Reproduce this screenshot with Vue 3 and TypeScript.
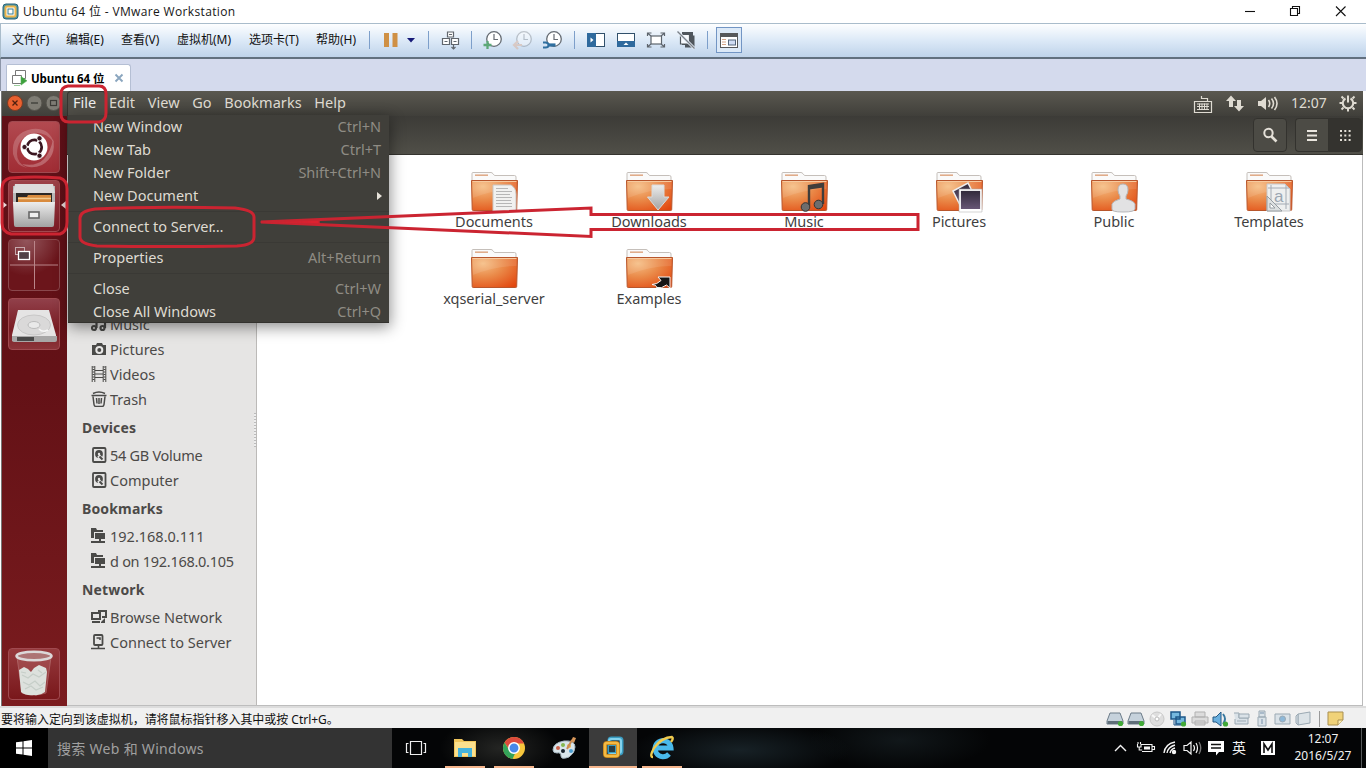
<script setup lang="ts">
interface MenuRow { label: string; keys?: string; sub?: boolean; sep?: boolean }
interface Place { label: string; icon?: string; heading?: boolean; tight?: boolean }
interface Folder { label: string; emblem: string }

const hostMenus: string[] = ['文件(F)', '编辑(E)', '查看(V)', '虚拟机(M)', '选项卡(T)', '帮助(H)']
const guestMenus: string[] = ['Edit', 'View', 'Go', 'Bookmarks', 'Help']

const fileMenu: MenuRow[] = [
  { label: 'New Window', keys: 'Ctrl+N' },
  { label: 'New Tab', keys: 'Ctrl+T' },
  { label: 'New Folder', keys: 'Shift+Ctrl+N' },
  { label: 'New Document', sub: true },
  { label: 'Connect to Server…', sep: true },
  { label: 'Properties', keys: 'Alt+Return', sep: true },
  { label: 'Close', keys: 'Ctrl+W', sep: true },
  { label: 'Close All Windows', keys: 'Ctrl+Q' },
]

const places: Place[] = [
  { label: 'Music', icon: 'music' },
  { label: 'Pictures', icon: 'camera' },
  { label: 'Videos', icon: 'film' },
  { label: 'Trash', icon: 'trash' },
  { label: 'Devices', heading: true },
  { label: '54 GB Volume', icon: 'disk', tight: true },
  { label: 'Computer', icon: 'disk' },
  { label: 'Bookmarks', heading: true },
  { label: '192.168.0.111', icon: 'share' },
  { label: 'd on 192.168.0.105', icon: 'share', tight: true },
  { label: 'Network', heading: true },
  { label: 'Browse Network', icon: 'network' },
  { label: 'Connect to Server', icon: 'server' },
]

const folders: Folder[] = [
  { label: 'Documents', emblem: 'doc' },
  { label: 'Downloads', emblem: 'down' },
  { label: 'Music', emblem: 'music' },
  { label: 'Pictures', emblem: 'pics' },
  { label: 'Public', emblem: 'person' },
  { label: 'Templates', emblem: 'template' },
  { label: 'xqserial_server', emblem: 'none' },
  { label: 'Examples', emblem: 'link' },
]
</script>

<template>
  <div class="screen">
    <svg class="defs" width="0" height="0">
      <defs>
        <radialGradient id="gFolder" cx="0.25" cy="0.2" r="1">
          <stop offset="0" stop-color="#f5bd83" /><stop offset="0.45" stop-color="#ea8a49" /><stop offset="1" stop-color="#e2470f" />
        </radialGradient>
        <linearGradient id="gSteel" x1="0" y1="0" x2="0" y2="1">
          <stop offset="0" stop-color="#ededed" /><stop offset="1" stop-color="#a2a2a2" />
        </linearGradient>
        <linearGradient id="gNight" x1="0" y1="0" x2="0" y2="1">
          <stop offset="0" stop-color="#2f2838" /><stop offset="1" stop-color="#6d5c7c" />
        </linearGradient>
      </defs>
    </svg>

    <header class="titlebar">
      <svg class="applogo" width="17" height="17" viewBox="0 0 17 17">
        <rect x="1" y="1" width="15" height="15" rx="3" fill="#4f93a0" stroke="#28657a" />
        <rect x="3.5" y="3.5" width="10" height="10" rx="1.5" fill="#fff" stroke="#e9b44b" stroke-width="2" />
        <rect x="6" y="6" width="5" height="5" fill="#fff" stroke="#337d92" />
      </svg>
      <span class="apptitle">Ubuntu 64 位 - VMware Workstation</span>
      <svg class="winbtns" width="110" height="20" viewBox="0 0 110 20" fill="none" stroke="#111" stroke-width="1.1">
        <path d="M1 9.500h10" />
        <path d="M46.500 6.500h7v7h-7zM48.500 6.500v-2h7v7h-2" />
        <path d="M92 4.500l9.500 9.500M101.500 4.500l-9.500 9.500" />
      </svg>
    </header>

    <div class="hostbar">
      <nav class="hostmenu"><span v-for="m in hostMenus" :key="m">{{ m }}</span></nav>
      <i class="sep first"></i>
      <svg class="tool" viewBox="0 0 30 26"><path d="M9 6h5v14H9zM17.500 6h5v14h-5z" fill="#cf9045" /></svg>
      <svg class="caret" viewBox="0 0 12 26"><path d="M2 11h8l-4 4.500z" fill="#161a78" /></svg>
      <i class="sep"></i>
      <svg class="tool" viewBox="0 0 30 26" fill="#fff" stroke="#60666d" stroke-width="1.200">
        <path d="M12.500 5h6v5h-6zM7.500 11.500h7v6h-7zM16.500 11.500h7v6h-7z" />
        <path d="M14 7.500h3M9.500 14.500h3M18.500 14.500h3M18.500 17.500v4M16.500 20l2 2 2-2" fill="none" />
      </svg>
      <i class="sep"></i>
      <svg v-for="n in 3" :key="n" class="tool" :class="{ faded: n === 2 }" viewBox="0 0 30 26">
        <circle cx="16" cy="12" r="7.300" fill="#fff" stroke="#666c73" stroke-width="1.300" />
        <path d="M16 7v5.500h4" fill="none" stroke="#666c73" stroke-width="1.200" />
        <path v-if="n === 1" d="M9.500 14v8M5.500 18h8" stroke="#5da878" stroke-width="2.300" />
        <path v-if="n === 2" d="M14 18H6M10 14l-4 4 4 4" fill="none" stroke="#df9b72" stroke-width="2.200" />
        <g v-if="n === 3" fill="none" stroke="#2f6f9f"><path d="M17.500 18H10" stroke-width="3.200" /><path d="M5 15.500h2.500q3 0 3 2.500t-3 2.500H5" stroke-width="2" /></g>
      </svg>
      <i class="sep"></i>
      <svg class="tool" viewBox="0 0 30 26"><rect x="6.500" y="6.500" width="17" height="13" fill="#fff" stroke="#31506b" /><path d="M6 6h9v14H6z" fill="#2f6a9d" /><path d="M9.500 10.500v5l3-2.500z" fill="#fff" /></svg>
      <svg class="tool" viewBox="0 0 30 26"><rect x="6.500" y="6.500" width="17" height="13" fill="#fff" stroke="#31506b" /><path d="M6 14h18v6H6z" fill="#2f6a9d" /><path d="M12.500 18h5L15 15.500z" fill="#fff" /></svg>
      <svg class="tool" viewBox="0 0 30 26" fill="none" stroke="#5d646c" stroke-width="1.200"><rect x="10" y="9" width="10.500" height="8" fill="#fff" /><path d="M6.500 9V6h4M23.500 9V6h-4M6.500 17v3h4M23.500 17v3h-4M7 6.500l3 2.500M23 6.500L20 9M7 19.500l3-2.500M23 19.500L20 17" /></svg>
      <svg class="tool" viewBox="0 0 30 26"><path d="M11 5h11v3.500h1.500v12H14V18H11z" fill="#4f565d" /><path d="M9.500 7.500h9v9.500h-9z" fill="#f7fafe" stroke="#4f565d" stroke-width="1.200" /><path d="M6.500 4.500l17 17" stroke="#e7effa" stroke-width="3" /><path d="M6.500 4.500l17 17" stroke="#7b8187" stroke-width="1.300" /></svg>
      <i class="sep"></i>
      <svg class="tool" viewBox="0 0 30 26"><rect x="2.500" y=".5" width="25" height="25" fill="#dce9f7" stroke="#7295c4" /><rect x="6.500" y="6.500" width="17" height="14" fill="#fff" stroke="#56585a" /><path d="M6 6h18v4H6z" fill="#56585a" /><path d="M8 12.500h4M8 15h4M8 17.500h4" stroke="#d4a68a" /><rect x="14.500" y="13" width="7" height="5" fill="#cfdcf3" stroke="#53657b" /></svg>
    </div>

    <div class="tabstrip">
      <div class="tab">
        <svg width="17" height="17" viewBox="0 0 17 17" fill="#fff" stroke="#777"><path d="M4.500 1.500h10v8h-10z" /><path d="M1.500 6.500h9v8h-9z" /><path d="M3 16.500h6M10 7.500l6 4.300-6 4.300z" fill="#3da13d" stroke="#5caf5c" stroke-width=".6" /></svg>
        <b>Ubuntu 64 位</b>
        <svg class="tabx" width="10" height="10" viewBox="0 0 10 10"><path d="M1.500 1.500l7 7M8.500 1.500l-7 7" stroke="#8ba6bf" stroke-width="1.900" /></svg>
      </div>
    </div>

    <section class="guest">
      <div class="panel">
        <svg class="wm" width="60" height="24" viewBox="0 0 60 24">
          <circle cx="13" cy="11" r="7.500" fill="#e9602f" stroke="#7d3b24" /><path d="M10.500 8.500l5 5M15.500 8.500l-5 5" stroke="#50200f" stroke-width="1.300" />
          <circle cx="32.500" cy="11" r="7.500" fill="#7e7c74" stroke="#55534c" /><path d="M29 11h7" stroke="#3c3b36" stroke-width="1.300" />
          <circle cx="51.500" cy="11" r="7.500" fill="#7e7c74" stroke="#55534c" /><rect x="48.500" y="8.500" width="6" height="5" fill="none" stroke="#3c3b36" stroke-width="1.200" />
        </svg>
        <span class="pfile">File</span>
        <span v-for="m in guestMenus" :key="m" class="pm">{{ m }}</span>
        <div class="indicators">
          <svg class="kbd" width="20" height="20" viewBox="0 0 20 20" fill="none" stroke="#dfdbd2" stroke-width="1.200"><path d="M1.500 7.500h17v11h-17zM14.500 7.500v-3h-6V2" /><path d="M4 10h12M4 12.500h12M4 15.500h12M6.500 9.500v6M9 9.500v6M11.500 9.500v6M14 9.500v6" stroke-width="1" /></svg>
          <svg class="net" width="18" height="18" viewBox="0 0 18 18" fill="#dfdbd2"><path d="M0 6l5-5.500L10 6H7v6H3V6z" /><path d="M8 11l5 5.500 5-5.500h-3V5h-4v6z" /></svg>
          <svg class="vol" width="22" height="18" viewBox="0 0 22 18"><path d="M1 6h3l5-4v13l-5-4H1z" fill="#dfdbd2" /><path d="M11.500 5q2.500 3.500 0 7M14.500 3.500q4 5 0 10M17.500 2q5 6.500 0 13" fill="none" stroke="#dfdbd2" stroke-width="1.600" /></svg>
          <span class="clock">12:07</span>
          <svg width="18" height="18" viewBox="0 0 18 18" fill="none" stroke="#dfdbd2"><path d="M6.500 4.500a5.200 5.200 0 1 0 5 0" stroke-width="2" /><path d="M9 1.500v7M2.500 2.500l2 2M15.500 2.500l-2 2M.5 9h3M14.500 9h3M2.500 15.500l2-2M15.500 15.500l-2-2M9 14.500v3" stroke-width="2" /></svg>
        </div>
      </div>

      <div class="navbar">
        <div class="nbtn single"><svg width="18" height="18" viewBox="0 0 18 18" fill="none" stroke="#e4e0d8"><circle cx="7.500" cy="7" r="4.200" stroke-width="2" /><path d="M10.500 10.500l5 5" stroke-width="2.600" /></svg></div>
        <div class="nbtn left"><svg width="12" height="12" viewBox="0 0 12 12"><path d="M1 2h10M1 6.500h10M1 11h10" stroke="#eae6df" stroke-width="2" /></svg></div>
        <div class="nbtn right"><svg width="12" height="12" viewBox="0 0 12 12"><path d="M1 2h11M1 6.500h11M1 11h11" stroke="#e4e0d8" stroke-width="2" stroke-dasharray="2 2.300" /></svg></div>
      </div>

      <div class="work">
        <aside class="sidebar">
          <div v-for="p in places" :key="p.label" :class="[p.heading ? 'heading' : 'place', { tight: p.tight }]">
            <svg v-if="p.icon" width="16" height="16" viewBox="0 0 16 16" fill="none" stroke="#4a4a48" stroke-width="1.500">
              <g v-if="p.icon === 'music'" stroke-width="2.200"><circle cx="3" cy="12" r="2" /><circle cx="11.500" cy="12" r="2" /><path d="M5.500 12V6h8.500v6" /></g>
              <g v-else-if="p.icon === 'camera'"><path d="M1 4h4l1-2h5l1 2h3v10H1z" fill="#4a4a48" stroke="none" /><circle cx="8.300" cy="9" r="3" fill="#4a4a48" stroke="#e8e7e6" stroke-width="2" /></g>
              <g v-else-if="p.icon === 'film'"><path d="M3.800 0v16M12.200 0v16M4 8h8M4 4.500h8M4 11.500h8" stroke-width="1" /><path d="M1.200 0v16M14.800 0v16" stroke-width="1" /><path d="M2.500 .5v15M13.500 .5v15" stroke-width="2" stroke-dasharray="1 1.500" /></g>
              <g v-else-if="p.icon === 'trash'"><path d="M2 5.500l1 8q.3 2 2 2h6q1.700 0 2-2l1-8M.5 4.500h15M2 2.500Q8-.5 14 2.500M5.500 7l.5 5.500M8 7v6M10.500 7l-.5 5.500" /></g>
              <g v-else-if="p.icon === 'disk'"><rect x="2" y="1" width="12.500" height="14" rx="1" stroke-width="1.800" /><circle cx="8" cy="7" r="3.900" fill="#4a4a48" stroke="none" /><circle cx="8" cy="7" r="1.200" fill="#e8e7e6" stroke="none" /><path d="M7.500 8.500l4 4.500" stroke="#e8e7e6" stroke-width="3.400" /><path d="M8.500 9.500l3 3" stroke-width="2" /></g>
              <g v-else-if="p.icon === 'share'"><path d="M0 0h5l1 2h6v2H3v6H0z" fill="#4a4a48" stroke="none" /><path d="M4 5h10v6H4z" fill="#4a4a48" stroke="none" /><path d="M9 11v4M0 14h14" stroke-width="2" /></g>
              <g v-else-if="p.icon === 'network'"><path d="M1 4h8v6H1z" stroke-width="2" /><path d="M7 2h8v6h-4M1 13h8" stroke-width="2" /><path d="M10 13l4-4v5h-4z" fill="#4a4a48" stroke="none" /></g>
              <g v-else><rect x="3" y="1" width="8.500" height="10" rx="1" stroke-width="1.800" /><path d="M5.500 4h3.500v2M7.500 11v3M0 14.500h14" stroke-width="1.600" /></g>
            </svg>
            <span>{{ p.label }}</span>
          </div>
          <i class="grip"></i>
        </aside>

        <main class="files">
          <div v-for="f in folders" :key="f.label" class="folder">
            <svg width="50" height="44" viewBox="0 0 50 44">
              <path d="M2 12V2.500q0-1 1-1h18q1 0 2 1.200l1.500 1.800h20q1.500 0 1.500 1.500v6z" fill="#fafafa" stroke="#c5bfba" />
              <path d="M5 4.200h13" stroke="#e0ac8a" stroke-width="1.600" />
              <path d="M1.500 9.500h46l-.8 29q0 1-1 1h-42.500q-1 0-1-1z" fill="url(#gFolder)" stroke="#b8562c" />
              <path d="M2.500 10.500h44" stroke="#f7ca9f" />
              <path d="M2.500 11h44v7Q25 18 3 27z" fill="#fff" opacity=".1" />
              <g v-if="f.emblem === 'doc'"><path d="M23 14h18q5 3 5 9v17H23z" fill="#f1f1f0" stroke="#c9c7c4" /><path d="M26 17.500h12M26 20.500h16M26 23.500h14M26 26.500h16M26 29.500h15M26 32.500h16M26 35.500h16" stroke="#b6b6b6" /></g>
              <g v-else-if="f.emblem === 'down'"><path d="M27 14h12v12h5L33 39 22.500 26H27z" fill="url(#gSteel)" stroke="#dadada" /></g>
              <g v-else-if="f.emblem === 'music'"><path d="M29 35V15l14-2v20" fill="none" stroke="#403d3b" stroke-width="2.400" /><path d="M29 16.500l14-2" stroke="#403d3b" stroke-width="4" /><circle cx="25.500" cy="36" r="4.300" fill="#6d6d6d" stroke="#343434" /><circle cx="38.500" cy="33.500" r="4.300" fill="#6d6d6d" stroke="#343434" /></g>
              <g v-else-if="f.emblem === 'pics'"><path d="M18 20l15-8 7 14-15 8z" fill="url(#gNight)" stroke="#eee" stroke-width="1.500" /><rect x="25" y="19" width="21" height="21" fill="url(#gNight)" stroke="#fff" stroke-width="1.800" /><path d="M24.500 39.500h22" stroke="#fff" stroke-width="3" /><path d="M24 18h23v23H24z" fill="none" stroke="#aaa" stroke-width=".5" /></g>
              <g v-else-if="f.emblem === 'person'"><path d="M33 13q5 0 5 6 0 3-2 6v3q8 2 9 5v5q0 3-12 3t-11-3v-5q1-3 8-5v-3q-2-3-2-6 0-6 5-6z" fill="#e2e2e3" stroke="#b7b7ba" /></g>
              <g v-else-if="f.emblem === 'template'"><path d="M22 13h18l5 5v22H22z" fill="#eeefef" stroke="#c7c9cc" /><path d="M26 14v24M41 14v24M23 17h21M23 33h21" stroke="#a4abb4" /><text x="29" y="31" class="glyph">a</text><path d="M22 25v15h15z" fill="#dcdfe0" stroke="#969da2" /><path d="M25 32v5h5z" fill="#fff" stroke="#969da2" /></g>
              <g v-else-if="f.emblem === 'link'"><path d="M27 36.500q5 0 9-4l-3-3.500h12v11l-3.500-3q-5 4-10 2.500 1-2-4.500-3z" fill="#161616" stroke="#f4f4f4" stroke-width="1" /></g>
            </svg>
            <span>{{ f.label }}</span>
          </div>
        </main>
      </div>

      <div class="launcher">
        <div class="tile dash"><svg viewBox="0 0 52 52"><path d="M5 33Q3 12 24 8q17-2 22 14Q38 10 24 12 9 17 9 33q0 9 10 14Q8 45 5 33z" fill="#fff" opacity=".2" /><path d="M45 18q4 17-11 26-12 5-20-1 14 3 22-5 7-8 9-20z" fill="#fff" opacity=".25" /><circle cx="26" cy="26" r="13.500" fill="#fff" /><circle cx="26.500" cy="26" r="7.200" fill="none" stroke="#3a1620" stroke-width="2.700" stroke-dasharray="13 2.080" stroke-dashoffset="-8.600" /><g fill="#3a1620" stroke="#fff" stroke-width=".8"><circle cx="16.500" cy="26" r="2.600" /><circle cx="31.500" cy="17.300" r="2.600" /><circle cx="31.500" cy="34.700" r="2.600" /></g></svg></div>
        <div class="tile drawer"><svg viewBox="0 0 52 52"><path d="M5 6h42v17H5z" fill="#b9b8b8" /><path d="M7 4h38l2 9H5z" fill="#dddbdb" /><path d="M8 13h36v10H8z" fill="#2c2725" /><path d="M10 17h9l1-2h23v8H10z" fill="#d98b3e" /><path d="M10 18.500h33" stroke="#f4ca8f" stroke-width="1.500" /><path d="M5 22h42l-1 23q0 2-2 2H8q-2 0-2-2z" fill="url(#gSteel)" /><rect x="21" y="32" width="10" height="6" fill="#eee" stroke="#666" stroke-width="1.600" /></svg></div>
        <div class="tile spaces"><svg viewBox="0 0 52 52"><path d="M2 26h48M26.500 2v48" stroke="#b98589" /><rect x="7.500" y="8.500" width="9" height="7" fill="none" stroke="#c6aaad" /><rect x="10.500" y="12.500" width="11" height="8" fill="#514046" stroke="#fff" stroke-width="1.300" /></svg></div>
        <div class="tile drive"><svg viewBox="0 0 52 52"><path d="M10 12h31l7 25v5q0 1-1 1H5q-1 0-1-1v-5z" fill="#e5e4e4" /><path d="M4 38h45v4q0 2-2 2H6q-2 0-2-2z" fill="#a8a7a7" /><path d="M9 39h17v4H9z" fill="#484848" /><ellipse cx="26" cy="27" rx="16.500" ry="10" fill="#dad9d9" stroke="#c8c7c7" /><ellipse cx="26" cy="27" rx="6" ry="3.500" fill="#e9e9e9" stroke="#bbb" /><path d="M31 31q4 4 9 1" fill="none" stroke="#f6f6f6" stroke-width="1.600" /></svg></div>
        <div class="tile bin"><svg viewBox="0 0 52 52"><path d="M9 9h34l-5 36q-12 4-24 0z" fill="#b96b6b" opacity=".4" stroke="#d9a9a9" /><path d="M11 22l5-3 4 2 3 3 3-4 5-3 7 3 1 4-2 20q-5 4-11 3-8 1-13-3z" fill="#dde1dd" /><path d="M13 24l5 1M30 22l4 3M14 27l6 3 5-4 6 3 7-5M15 34l6 3 6-4 5 5 5-4M17 41l6-3 5 4 7-3" fill="none" stroke="#c6cec8" stroke-width="1.200" /><ellipse cx="26" cy="8" rx="17.500" ry="4.200" fill="#ad7474" stroke="#dcd8d8" stroke-width="2.600" /></svg></div>
        <i class="pip lp"></i><i class="pip rp"></i>
      </div>

      <div class="dropdown">
        <div v-for="r in fileMenu" :key="r.label" class="mrow" :class="{ sepd: r.sep }">
          <span>{{ r.label }}</span>
          <span v-if="r.keys" class="keys">{{ r.keys }}</span>
          <i v-if="r.sub" class="arrow"></i>
        </div>
      </div>
    </section>

    <footer class="status">
      <span>要将输入定向到该虚拟机，请将鼠标指针移入其中或按 Ctrl+G。</span>
      <svg class="devs" width="246" height="18" viewBox="0 0 246 18">
        <g v-for="x in [0, 21]" :key="x" :transform="`translate(${x} 0)`"><path d="M4 3h10l3 8v3H1v-3z" fill="#c6d2dc" stroke="#6d7c89" /><path d="M1.500 11h15v3h-15z" fill="#5f6e79" /><circle cx="14.500" cy="13.500" r="2.600" fill="#42aa38" /></g>
        <circle cx="51" cy="9" r="7" fill="#dedede" stroke="#c8c8c8" /><path d="M46 5l5 4 4-5" fill="none" stroke="#f8f8f8" stroke-width="2" /><circle cx="51" cy="9" r="2" fill="#fff" stroke="#bcbcbc" />
        <g><path d="M65 2h9v7h-9zM70 7h9v7h-9z" fill="#75b8de" stroke="#1c5789" stroke-width="1.500" /><path d="M68 10v5h8" fill="none" stroke="#1c5789" /><circle cx="77.500" cy="14" r="2.600" fill="#42aa38" /></g>
        <g fill="#dcdcdc" stroke="#b1b1b1"><path d="M89 2h10v5H89zM86 7h16v6H86zM89 11h10v4H89z" /></g>
        <path d="M107 7h3l5-5v14l-5-4h-3z" fill="#6ab0df" stroke="#245882" /><path d="M117 4q4 5 0 10" fill="none" stroke="#37789f" stroke-width="2" /><circle cx="119.500" cy="14" r="2.600" fill="#42aa38" />
        <g fill="#dae2e8" stroke="#9ba9b3"><path d="M128 3h5v5h9v6h-13v-5" /><path d="M133 4h10v4h-10z" /><path d="M131 11h9" /><path d="M153 1h6v6h-6zM152 7h8v9h-8z" /><path d="M154 3h4M156 9v5" stroke="#7891aa" /><path d="M169 4h15v10h-15z" /><circle cx="176.500" cy="9" r="3" fill="#8db8d9" /><path d="M192 4l12-2v11l-12 2z" fill="#dce3e7" /><path d="M190 6l2-2v11l-2-2z" /></g>
        <path d="M213.500 1v16" stroke="#999" /><path d="M222 2h15v8l-5 5h-10z" fill="#f0d279" stroke="#a98f50" /><path d="M232 15v-5h5" fill="#fff0b4" stroke="#a98f50" />
      </svg>
    </footer>

    <div class="taskbar">
      <div class="start"><svg width="16" height="16" viewBox="0 0 16 16" fill="#fff"><path d="M0 2.300l6.500-.9v6.100H0zM7.500 1.200L16 0v7.500H7.500zM0 8.500h6.500v6.100L0 13.700zM7.500 8.500H16V16l-8.500-1.200z" /></svg></div>
      <div class="search">搜索 Web 和 Windows</div>
      <div class="cell"><svg width="22" height="18" viewBox="0 0 22 18" fill="none" stroke="#eee" stroke-width="1.200"><path d="M5.500 2.500h11v13h-11zM3.500 4.500h-2v9h2M18.500 4.500h2v9h-2" /></svg></div>
      <div class="cell open"><svg width="24" height="24" viewBox="0 0 24 24"><path d="M1 3h8l2 2h12v16H1z" fill="#f0c55c" /><path d="M2 6h20v14H2z" fill="#fbe08e" /><path d="M5 12h14v9h-4v-4H9v4H5z" fill="#45b3dd" /></svg></div>
      <div class="cell open"><svg width="24" height="24" viewBox="0 0 24 24"><circle cx="12" cy="12" r="11" fill="#f7c63c" /><path d="M2.500 6.500A11 11 0 0 1 22 7.500H12L7.500 14z" fill="#dd4b3d" /><path d="M2.500 6.500L7.500 14.500l6 2-3 6.500A11 11 0 0 1 2.500 6.500z" fill="#34a359" /><circle cx="12" cy="12" r="5.200" fill="#4688e8" stroke="#fff" stroke-width="1.500" /></svg></div>
      <div class="cell"><svg width="26" height="26" viewBox="0 0 26 26"><path d="M13 6Q2 8 2 15q0 3 4 3 4-1 4 3t8 1q6-4 6-10 0-7-11-6z" fill="#d9e5ea" stroke="#a6b7c1" /><circle cx="7" cy="13" r="2" fill="#cb624c" /><circle cx="12" cy="10" r="2" fill="#85b950" /><circle cx="18" cy="11" r="2" fill="#eaaf48" /><circle cx="20" cy="16" r="2" fill="#4b9ed0" /><circle cx="12" cy="16" r="2" fill="#17212a" /><path d="M16 14l5-9" stroke="#c98a55" stroke-width="2" /><path d="M20 6l2-4 3 1-2 5z" fill="#d9985a" /></svg></div>
      <div class="cell active open"><svg width="24" height="24" viewBox="0 0 24 24" fill="none"><rect x="8.500" y="2.500" width="12" height="15" rx="2" stroke="#399bc0" stroke-width="4" /><rect x="8" y="3" width="12" height="14" rx="2" stroke="#83d2ec" stroke-width="2" /><rect x="4" y="7" width="13" height="13" rx="2" stroke="#bd7b15" stroke-width="4" /><rect x="4" y="7" width="13" height="13" rx="2" stroke="#f3ba44" stroke-width="2.600" /><rect x="7.500" y="9.500" width="7" height="7" fill="#283c43" stroke="#399bc0" /></svg></div>
      <div class="cell open"><svg width="26" height="26" viewBox="0 0 26 26" fill="none"><path d="M20 19a8 8 0 1 1 2-6H8" stroke="#49b9eb" stroke-width="5" /><path d="M4 22Q0 22 5 13 13 2 23 2q2 1-1 5" stroke="#f0ca4e" stroke-width="2.300" /></svg></div>
      <svg class="tray" width="172" height="24" viewBox="0 0 172 24" fill="none" stroke="#f4f4f4" stroke-width="1.400">
        <path d="M2 15l5.500-5.500L13 15" />
        <path d="M28 8.500h11v7H29M39.500 10.500h2v3h-2M24.500 8v3h3.500V8M26.200 11v3h3M25 6v2M27.500 6v2" stroke-width="1.100" /><path d="M31 10.500h6v3h-6z" fill="#f4f4f4" stroke="none" />
        <path d="M51 17Q52 8 62 6M54 17q1-6 8-8M57 17q1-4 5-5" /><circle cx="61" cy="16" r="1.500" fill="#f4f4f4" />
        <path d="M71 9.500h3l4-3.500v12l-4-3.500h-3zM80.500 9q2 3 0 6" stroke-width="1.200" /><path d="M83 7q3 5 0 10" stroke-width="1.200" /><path d="M86 6q3.500 6 0 12" stroke="#777" />
        <path d="M95 5h16v11h-5l-3 3.500V16h-8z" fill="#fff" stroke="none" /><path d="M98 8.500h10M98 12h10" stroke="#111" />
        <path d="M148 5h14v14h-14z" fill="#fff" stroke="none" /><path d="M151 17V8l4 6 4-6v9" stroke="#111" stroke-width="1.600" />
      </svg>
      <span class="ime">英</span>
      <div class="when"><span>12:07</span><span>2016/5/27</span></div>
      <i class="peek"></i>
    </div>

    <svg class="marks" width="1366" height="768" viewBox="0 0 1366 768" fill="none" stroke="#cb2431" stroke-width="3" stroke-linejoin="round">
      <path d="M68 86h31q7 0 7 8v19q0 8-7 9H69q-8 0-8-8V94q0-7 7-8z" />
      <path d="M10 178q25-2 50 0 7 2 7 11v33q0 10-7 12H11q-9-2-9-11v-34q0-9 8-11z" />
      <path d="M95 209q60-3 140-1 19 2 19 9v20q0 8-17 9-70 1-140 0-17-2-17-9v-19q0-7 15-9z" />
      <path d="M261 222L591 208v6.500h327v15H591v7z" stroke-linejoin="miter" />
      <path d="M261 222l58-2v4z" fill="#dc2230" stroke-width="1.500" />
    </svg>
  </div>
</template>

<style>
html, body { margin: 0; overflow: hidden; }
</style>

<style scoped>
* { box-sizing: border-box; }
.screen { position: relative; width: 1366px; height: 768px; overflow: hidden; background: #fff; display: flex; flex-direction: column; font-family: "Noto Sans", "Noto Sans CJK SC", sans-serif; white-space: nowrap; }
.screen svg { flex: none; display: block; }
.defs, .marks { position: absolute; left: 0; top: 0; }
.marks { pointer-events: none; }
.titlebar { height: 23px; flex: none; display: flex; align-items: center; padding-left: 2px; background: #fff; }
.apptitle { margin-left: 4px; font-family: "Open Sans", "Noto Sans CJK SC", sans-serif; font-size: 12px; line-height: 22px; color: #161616; letter-spacing: .35px; }
.winbtns { margin-left: auto; margin-right: 12px; }
.hostbar { height: 36px; flex: none; display: flex; align-items: center; padding-bottom: 2px; border-top: 1px solid #a9bccb; border-bottom: 2px solid #62707f; background: linear-gradient(#fdfeff, #dce9f7 50%, #bfd3ea); border-left: 1px solid #a9bccb; }
.hostmenu { display: grid; grid-template-columns: 54px 55px 56px 72px 67px 53px; padding-left: 11px; font-size: 12px; line-height: 30px; color: #111; }
.sep { width: 1px; height: 18px; margin: 0 6px; background: #7d9fca; }
.sep.first { margin: 0 5px 0 0; }
.tool { width: 30px; height: 26px; }
.faded { opacity: .35; }
.caret { width: 12px; height: 26px; margin-right: 5px; }
.tabstrip { height: 32px; flex: none; padding: 5px 0 0 5px; background: #d4daed; border-left: 1px solid #8d96a8; }
.tab { width: 125px; height: 27px; padding-left: 5px; padding-bottom: 1px; display: flex; align-items: center; background: #fff; border: 1px solid #b5bfd4; border-bottom: 0; border-radius: 2px 3px 0 0; }
.tab b { margin-left: 3px; width: 83px; font-family: "Open Sans", "Noto Sans CJK SC", sans-serif; font-size: 11.500px; letter-spacing: -.08px; color: #000; }
.tab svg:first-child { margin-left: -1px; }

.guest { position: relative; height: 615px; flex: none; margin-left: 1px; margin-right: 3px; border-left: 1px solid #777; display: flex; flex-direction: column; }
.panel { height: 25px; flex: none; display: flex; align-items: center; background: linear-gradient(#5a5850, #403f3a); color: #dfdbd2; font-size: 14.500px; }
.pfile { width: 39px; height: 25px; margin-left: 5px; padding-left: 5px; line-height: 20px; border: 1px solid #35342f; border-bottom: 0; border-radius: 4px 4px 0 0; background: #504f48; color: #eee; }
.pm { line-height: 21px; margin: -2px 12.600px 0 0; letter-spacing: .04px; }
.pfile + .pm { margin-left: 3px; }
.indicators { margin-left: auto; display: flex; align-items: center; padding-right: 6px; }
.kbd { margin-top: 0; }
.net { margin-left: 13px; }
.vol { margin-left: 13px; }
.clock { margin: -2px 12px 0 12px; width: 36px; font-size: 14px; line-height: 22px; }
.indicators > svg:last-child { margin-top: -2px; }
.navbar { height: 39px; flex: none; display: flex; justify-content: flex-end; padding: 2px 1px 0 0; background: linear-gradient(#3c3b37, #504f48); border-bottom: 1px solid #35342f; }
.nbtn { width: 34px; height: 34px; display: flex; align-items: center; justify-content: center; border: 1px solid #33322e; background: #4c4b45; }
.nbtn.single { margin-right: 8px; border-radius: 4px; }
.nbtn.left { width: 33px; border-radius: 4px 0 0 4px; border-right: 0; }
.nbtn.right { border-radius: 0 4px 4px 0; background: #34332f; }
.work { flex: 1; min-height: 0; display: flex; margin-left: 65px; border-right: 1px solid #bbb; border-bottom: 1px solid #bdbdbd; }
.sidebar { position: relative; width: 190px; flex: none; padding: 156.500px 0 0 15px; background: #e6e5e4; border-right: 1px solid #bcbab8; color: #4c4a48; font-size: 14.500px; }
.place { height: 25px; display: flex; align-items: center; padding-left: 9px; }
.place span { margin-left: 3px; }
.tight { letter-spacing: -.28px; }
.heading { height: 31px; line-height: 31px; font-weight: 700; font-size: 14px; letter-spacing: .15px; }
.grip { position: absolute; right: 0; top: 258px; width: 2px; height: 34px; background: repeating-linear-gradient(#bbb 0 1px, #eee 1px 3px); }
.files { flex: 1; display: grid; grid-template-columns: repeat(6, 155px); grid-auto-rows: 77px; padding: 16px 0 0 159.500px; background: #fff; }
.folder { display: flex; flex-direction: column; align-items: center; font-size: 14.500px; color: #3f3f3f; }
.folder span { line-height: 20px; margin-top: -4px; letter-spacing: -.04px; }
.folder svg { margin-left: 1px; }
.glyph { font: 17px "Liberation Sans", sans-serif; fill: #9ba6b2; }

.launcher { position: absolute; left: 0; top: 25px; width: 65px; height: 590px; display: flex; flex-direction: column; gap: 7px; padding: 5px 0 6px 6px; background: linear-gradient(#611018, #631116 45%, #7b1c1f); }
.tile { width: 52px; height: 52px; flex: none; border-radius: 4px; border: 1px solid #a04a50; background: linear-gradient(#8c353b, #751a20); }
.tile svg { width: 52px; height: 52px; margin: -1px; }
.dash { background: linear-gradient(#b24a50, #a02c34); }
.drawer { background: linear-gradient(#9d4148, #7c1a24); }
.spaces { border-color: #8a474c; background: radial-gradient(circle at 35% 0, #93565c, #6b151b 60%); }
.drive { background: linear-gradient(#91404a, #7a1c23 60%, #8b3439); }
.bin { margin-top: auto; background: linear-gradient(#963a3d, #79171b); }
.pip { position: absolute; top: 85px; border: 4px solid transparent; }
.lp { left: 0; border-left: 5px solid #eadcdc; border-right: 0; }
.rp { right: 1px; border-right: 5px solid #eadcdc; border-left: 0; }
.dropdown { position: absolute; left: 66px; top: 24px; width: 321px; height: 208px; background: #403f3a; color: #dfdbd2; font-size: 14.500px; box-shadow: 1px 4px 14px rgba(0, 0, 0, .45); border-bottom: 1px solid #33322e; }
.mrow { height: 23px; display: flex; align-items: center; justify-content: space-between; padding: 0 8px 0 25px; }
.mrow > span { margin-top: -1px; }
.mrow.sepd { height: 31px; padding-top: 8px; background: linear-gradient(#3a3935, #3a3935) 0 4px / 100% 1px no-repeat; }
.keys { color: #8f8c84; }
.arrow { border: 4px solid transparent; border-left: 5px solid #e7e3da; border-right: 0; margin-right: -1px; }

.status { height: 22px; flex: none; display: flex; align-items: center; background: #f0f0f0; border-top: 2px solid #dcdcdc; font-size: 12px; letter-spacing: -.03px; color: #111; }
.status span { line-height: 20px; margin: 3px 0 0 1px; }
.devs { margin: 2px 14px 0 auto; }
.taskbar { height: 40px; flex: none; display: flex; align-items: stretch; color: #f1f1f1; background: radial-gradient(ellipse 60px 30px at 500px 20px, #242523, transparent), radial-gradient(ellipse 110px 28px at 740px 22px, #172126, transparent), radial-gradient(ellipse 90px 30px at 900px 12px, #11171a, transparent), #040506; }
.start { width: 48px; display: flex; align-items: center; justify-content: center; background: #000; }
.search { width: 344px; padding-left: 9px; line-height: 41px; background: #333; color: #a0a0a0; font-size: 14px; letter-spacing: .3px; }
.cell { width: 48px; margin-right: 1.200px; display: flex; align-items: center; justify-content: center; background: linear-gradient(#f5b58c, #f5b58c) center bottom / 0 2px no-repeat; }
.cell.open { background-size: 40px 2px; }
.cell.active { background-color: #3b3b3b; background-size: 48px 2px; }
.tray { margin: 8px 0 0 auto; }
.ime { position: relative; width: 16px; margin-left: -53px; font-size: 14px; line-height: 40px; }
.when { margin: 0 4px 0 41px; width: 68px; display: flex; flex-direction: column; align-items: center; font-size: 12px; line-height: 17px; padding-top: 2px; }
.peek { width: 1px; margin-right: 4px; background: #55585a; }
</style>
